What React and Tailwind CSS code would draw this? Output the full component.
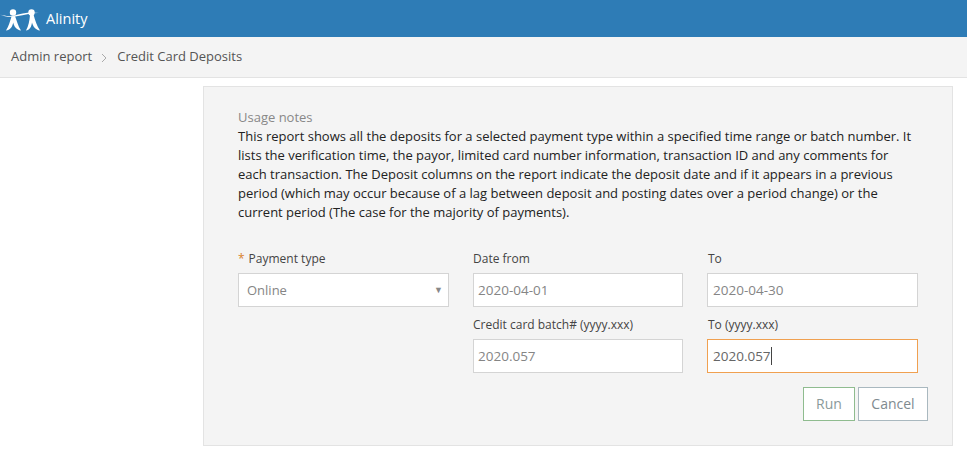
const font = { fontFamily: '"Open Sans", sans-serif' };

function Logo() {
  return (
    <svg width="40" height="28" viewBox="0 0 40 28" className="shrink-0" fill="white">
      <path d="M0 9.5 C5 11 9 11.5 14 10.5 C21 8.5 30 6.5 39 8 C31 7.8 24 10 18 11 C11 12.5 5 12 0 9.5Z" />
      <circle cx="13" cy="7.5" r="3.2" />
      <circle cx="31.5" cy="7.5" r="3.2" />
      <path d="M11.5 11.5 C10 16 9 21 6 25.5 C10 25 12.5 22 13.2 17.5 C14 21.5 16.5 25 21 25.5 C18 21 16.5 15 15 11Z" />
      <path d="M30 10 C29.5 16 28.5 21 26 25.5 C29.5 25 31.5 22 32 17.5 C33 21.5 35.5 25 40 25.5 C37 21 35 15 33.5 9.5Z" />
    </svg>
  );
}

function Field({ label, value, focused, wide }) {
  return (
    <div className="flex flex-col">
      <label className={`text-[12px] h-[22px] leading-[16px] text-[#444] ${wide ? "pl-px" : ""}`}>
        {label}
      </label>
      <div className={`h-[34px] bg-white border flex items-center text-[13.5px] ${wide ? "pl-[5px]" : "pl-[4px]"} ${focused ? "border-[#f0a050] text-[#666]" : "border-[#d4d4d4] text-[#858585]"}`}>
        {value}
        {focused && <span className="w-px h-[18px] bg-[#444]" />}
      </div>
    </div>
  );
}

export default function App() {
  return (
    <div style={font} className="w-[967px] h-[453px] bg-white overflow-hidden">
      <header className="h-[37px] bg-[#2e7cb6] flex items-center text-white text-[14.5px]">
        <Logo />
        <span className="ml-[6px]">Alinity</span>
      </header>
      <nav className="h-[41px] bg-[#f4f4f4] border-b border-[#e3e3e3] flex items-center pl-[11px] text-[13px] text-[#555]">
        <span>Admin report</span>
        <svg width="6" height="10" viewBox="0 0 6 10" fill="none" stroke="#aaa" strokeWidth="1" className="ml-[9px] mr-[10px] mt-[2px]">
          <path d="M1 1 L5 5 L1 9" />
        </svg>
        <span>Credit Card Deposits</span>
      </nav>
      <main className="ml-[203px] mt-[8px] w-[750px] h-[360px] bg-[#f4f4f4] border border-[#e3e3e3] pl-[34px] pt-[21px]">
        <div className="w-[680px] text-[13px] leading-[19px] text-[#222]">
          <div className="text-[#888]">Usage notes</div>
          <p>
            This report shows all the deposits for a selected payment type within a specified time range or batch number. It lists the verification time, the payor, limited card number information, transaction ID and any comments for each transaction. The Deposit columns on the report indicate the deposit date and if it appears in a previous period (which may occur because of a lag between deposit and posting dates over a period change) or the current period (The case for the majority of payments).
          </p>
        </div>
        <div className="grid grid-cols-[211px_210px_211px] gap-x-[24px] gap-y-[10px] mt-[29px]">
          <div className="flex flex-col">
            <label className="text-[12px] h-[22px] leading-[16px] text-[#444]">
              <span className="text-[#d9822b] mr-1">*</span>Payment type
            </label>
            <div className="h-[34px] bg-white border border-[#d4d4d4] flex items-center justify-between pl-[8px] pr-[5px] text-[13px] text-[#858585]">
              <span className="pt-px">Online</span>
              <span className="text-[9px] text-[#888]">▼</span>
            </div>
          </div>
          <Field label="Date from" value="2020-04-01" />
          <Field label="To" value="2020-04-30" wide />
          <div />
          <Field label="Credit card batch# (yyyy.xxx)" value="2020.057" />
          <Field label="To (yyyy.xxx)" value="2020.057" focused wide />
        </div>
        <div className="flex justify-end gap-[3px] mt-[14px] mr-[24px]">
          <button className="w-[52px] h-[34px] pb-px bg-white border border-[#8fbc8f] text-[14px] text-[#8a9a9a]">Run</button>
          <button className="w-[70px] h-[34px] pb-px bg-white border border-[#a9b8bf] text-[14px] text-[#7f8a90]">Cancel</button>
        </div>
      </main>
    </div>
  );
}
